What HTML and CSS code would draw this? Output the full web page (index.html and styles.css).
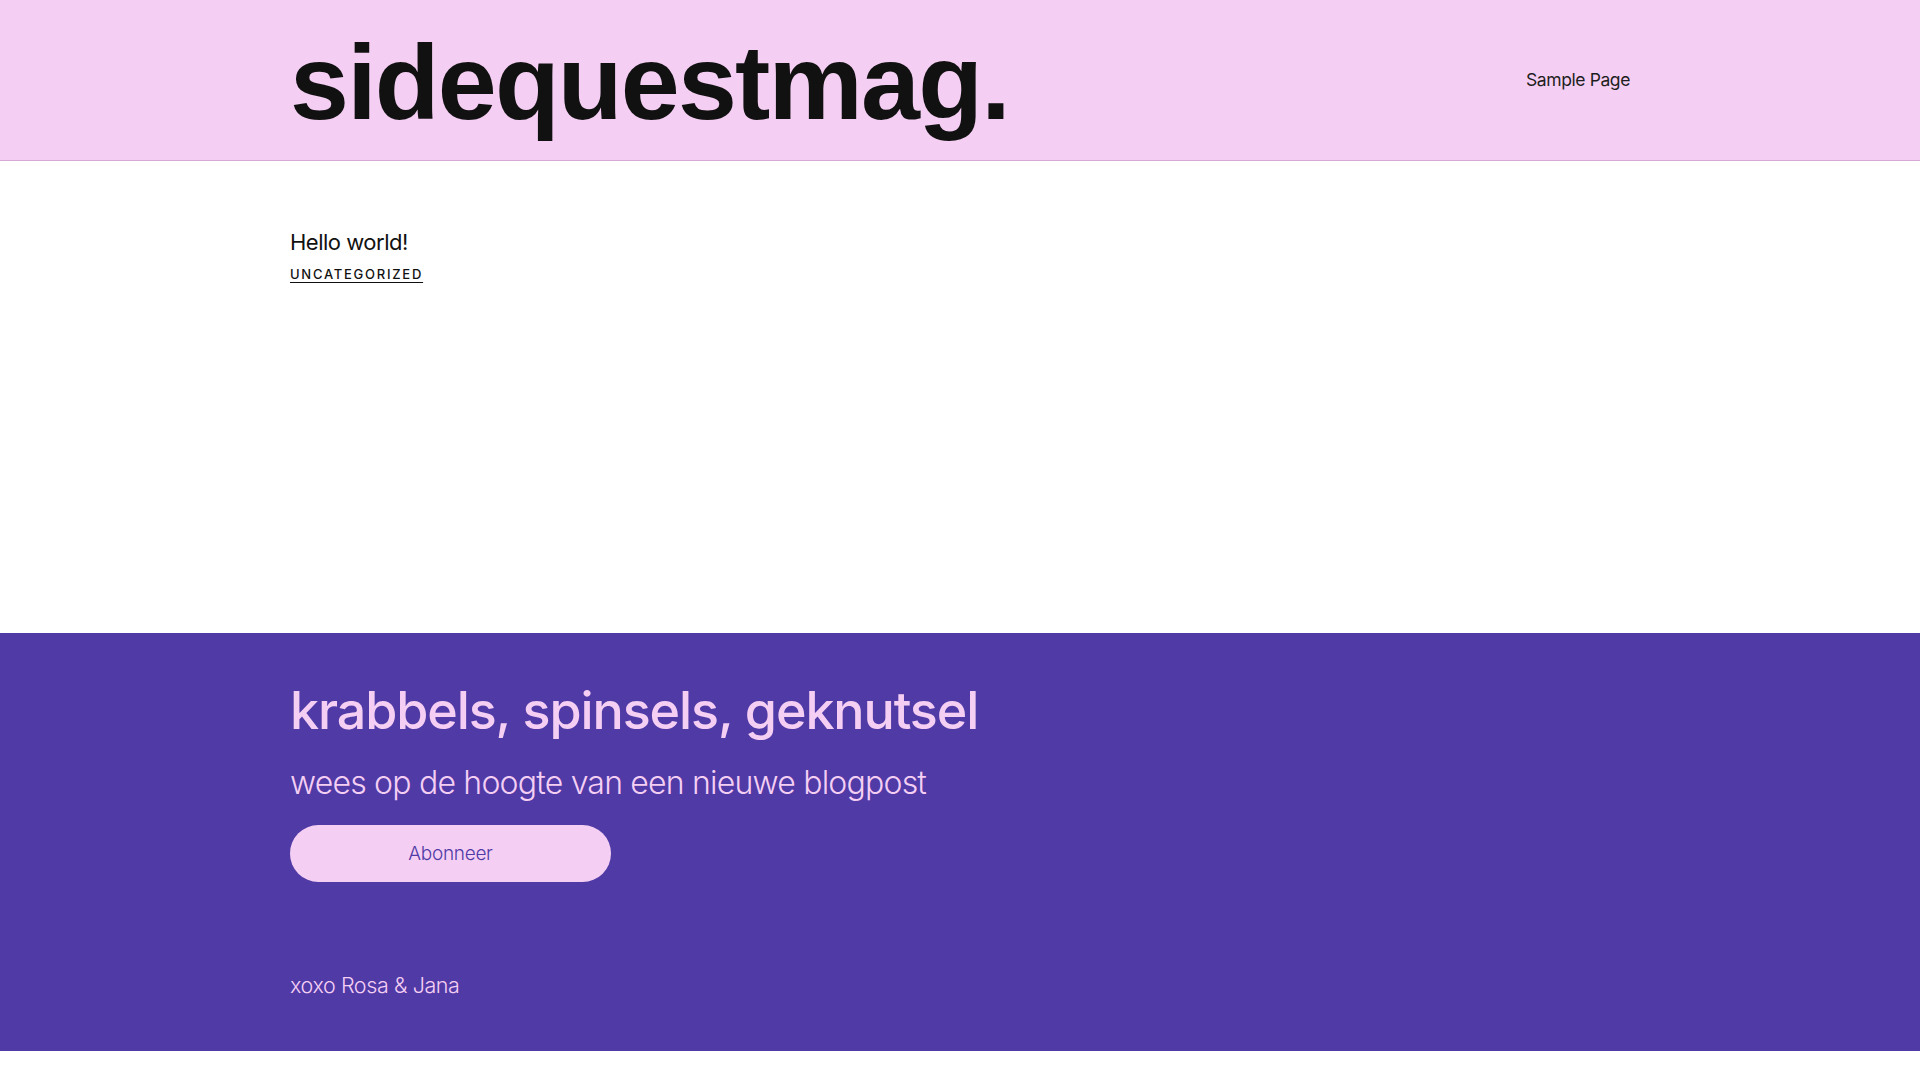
FILE: index.html
```html
<!DOCTYPE html>
<html lang="nl">
<head>
<meta charset="utf-8">
<title>sidequestmag.</title>
<link rel="stylesheet" href="styles.css">
</head>
<body>
<header class="site-header">
  <div class="container header-inner">
    <a class="site-title" href="#">sidequestmag.</a>
    <nav class="nav"><a href="#">Sample Page</a></nav>
  </div>
</header>
<main class="site-main">
  <div class="container">
    <article class="post">
      <h2 class="post-title">Hello world!</h2>
      <a class="post-cat" href="#">UNCATEGORIZED</a>
    </article>
  </div>
</main>
<footer class="site-footer">
  <div class="container">
    <h2 class="footer-heading">krabbels, spinsels, geknutsel</h2>
    <p class="footer-sub">wees op de hoogte van een nieuwe blogpost</p>
    <a class="btn" href="#">Abonneer</a>
    <p class="footer-sign">xoxo Rosa &amp; Jana</p>
  </div>
</footer>
</body>
</html>
```
FILE: styles.css
```css
* { box-sizing: border-box; }
html, body { margin: 0; padding: 0; }
body {
  font-family: Inter, "Noto Sans", sans-serif;
  font-weight: 300;
  color: #111;
  background: #fff;
}
a { color: inherit; text-decoration: none; }
.container {
  width: 1340px;
  margin: 0 auto;
}
.site-header {
  background: #f5cff3;
  height: 161px;
  border-bottom: 1px solid #d6a8d6;
}
.header-inner {
  height: 160px;
  display: flex;
  align-items: center;
  justify-content: space-between;
}
.site-title {
  font-family: "Liberation Sans", Arial, sans-serif;
  font-weight: 700;
  font-size: 106px;
  letter-spacing: -1.8px;
  color: #111;
  line-height: 1;
  margin-top: 4px;
}
.nav a {
  display: block;
  margin-top: -2px;
  font-size: 17.5px;
  font-weight: 400;
  color: #1e1e1e;
  letter-spacing: -0.4px;
}
.site-main {
  height: 472px;
  padding-top: 66px;
}
.post-title {
  margin: 0;
  font-size: 22px;
  font-weight: 400;
  letter-spacing: -0.5px;
  line-height: 30px;
}
.post-cat {
  display: inline-block;
  margin-top: 9px;
  font-size: 13px;
  font-weight: 500;
  letter-spacing: 1.75px;
  text-decoration: underline;
  text-underline-offset: 3px;
}
.site-footer {
  background: #4f3aa6;
  color: #f5cff3;
  height: 418px;
  padding-top: 44px;
}
.footer-heading {
  margin: 0;
  font-size: 52px;
  font-weight: 500;
  letter-spacing: -1.1px;
  line-height: 68px;
}
.footer-sub {
  margin: 16px 0 0;
  font-size: 32px;
  font-weight: 300;
  letter-spacing: -0.8px;
  line-height: 44px;
}
.btn {
  display: flex;
  align-items: center;
  justify-content: center;
  width: 321px;
  height: 57px;
  margin-top: 20px;
  border-radius: 29px;
  background: #f5cff3;
  color: #4f3aa6;
  font-size: 19px;
  font-weight: 300;
  letter-spacing: -0.3px;
}
.footer-sign {
  margin: 90px 0 0;
  font-size: 21.5px;
  font-weight: 300;
  letter-spacing: -0.4px;
}
```
